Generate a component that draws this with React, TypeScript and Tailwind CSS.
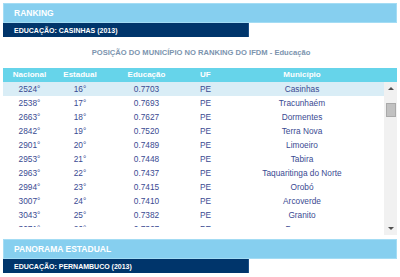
import React from "react";

const rows: [string, string, string, string, string][] = [
  ["2524°", "16°", "0.7703", "PE", "Casinhas"],
  ["2538°", "17°", "0.7693", "PE", "Tracunhaém"],
  ["2663°", "18°", "0.7627", "PE", "Dormentes"],
  ["2842°", "19°", "0.7520", "PE", "Terra Nova"],
  ["2901°", "20°", "0.7489", "PE", "Limoeiro"],
  ["2953°", "21°", "0.7448", "PE", "Tabira"],
  ["2963°", "22°", "0.7437", "PE", "Taquaritinga do Norte"],
  ["2994°", "23°", "0.7415", "PE", "Orobó"],
  ["3007°", "24°", "0.7410", "PE", "Arcoverde"],
  ["3043°", "25°", "0.7382", "PE", "Granito"],
  ["3071°", "26°", "0.7367", "PE", "Bezerros"],
];

function SectionHeader({ title, sub }: { title: string; sub: string }) {
  return (
    <div className="flex flex-col">
      <div className="h-[20px] bg-[#86cfef] border border-[#a3dcf4] flex items-center pl-[10px]">
        <span className="text-white font-bold text-[8.5px] leading-none">{title}</span>
      </div>
      <div className="h-[14px] w-[246px] bg-[#00356b] border-r border-[#1a4f86] flex items-center pl-[11px]">
        <span className="text-white font-bold text-[7px] leading-none">{sub}</span>
      </div>
    </div>
  );
}

export default function App() {
  return (
    <div
      className="w-[400px] h-[277px] bg-white p-[3px] overflow-hidden"
      style={{ fontFamily: '"Liberation Sans", Arial, sans-serif' }}
    >
      <SectionHeader title="RANKING" sub="EDUCAÇÃO: CASINHAS (2013)" />
      <div className="h-[31px] flex items-center justify-center">
        <span className="text-[#7c94ae] font-bold text-[7.6px] leading-none pl-[2px]">
          POSIÇÃO DO MUNICÍPIO NO RANKING DO IFDM - Educação
        </span>
      </div>
      <div className="h-[14px] bg-[#66d4ea] flex items-center text-white font-bold text-[8px] leading-none">
        <div className="w-[53px] text-center">Nacional</div>
        <div className="w-[48px] text-center">Estadual</div>
        <div className="w-[85px] text-center">Educação</div>
        <div className="w-[31px] pl-[11px]">UF</div>
        <div className="w-[164px] text-center">Município</div>
        <div className="w-[13px]" />
      </div>
      <div className="flex">
        <div className="w-[381px] h-[145px] overflow-hidden">
          {rows.map((r, i) => (
            <div
              key={i}
              className={
                "h-[14px] flex items-center text-[#3a4a92] text-[8.3px] leading-none " +
                (i === 0 ? "bg-[#d9edf6]" : "bg-white")
              }
            >
              <div className="w-[53px] text-center">{r[0]}</div>
              <div className="w-[48px] text-center">{r[1]}</div>
              <div className="w-[85px] text-center">{r[2]}</div>
              <div className="w-[31px] pl-[11px]">{r[3]}</div>
              <div className="w-[164px] text-center">{r[4]}</div>
            </div>
          ))}
        </div>
        <div className="w-[13px] h-[153px] bg-[#f1f1f1] flex flex-col items-center">
          <div className="h-[13px] w-full flex items-center justify-center">
            <div className="w-0 h-0 border-l-[3px] border-r-[3px] border-b-[3px] border-l-transparent border-r-transparent border-b-[#505050]" />
          </div>
          <div className="w-[10px] h-[14px] bg-[#c1c1c1] border border-[#a9a9a9] mt-[8px]" />
          <div className="flex-1" />
          <div className="h-[13px] w-full flex items-center justify-center">
            <div className="w-0 h-0 border-l-[3px] border-r-[3px] border-t-[3px] border-l-transparent border-r-transparent border-t-[#505050]" />
          </div>
        </div>
      </div>
      <div className="mt-[4px]">
        <SectionHeader title="PANORAMA ESTADUAL" sub="EDUCAÇÃO: PERNAMBUCO (2013)" />
      </div>
    </div>
  );
}
